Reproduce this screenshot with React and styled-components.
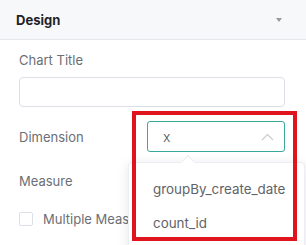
import React from 'react'
import styled, { createGlobalStyle } from 'styled-components'

const Global = createGlobalStyle`
  html, body {
    margin: 0;
    padding: 0;
    background: #fff;
  }
  body {
    font-family: Inter, "Noto Sans", sans-serif;
    width: 306px;
    height: 245px;
    overflow: hidden;
  }
`

const Panel = styled.div`
  position: relative;
  width: 306px;
  height: 245px;
  overflow: hidden;
  background: #fff;
`

const Header = styled.div`
  height: 39px;
  display: flex;
  align-items: center;
  justify-content: space-between;
  padding: 0 24px 0 16px;
  background: #f7f8fa;
  border-bottom: 1px solid #e6e8eb;
`

const HeaderTitle = styled.span`
  font-size: 13px;
  font-weight: 700;
  color: #1f2329;
`

const Caret = styled.span`
  width: 0;
  height: 0;
  border-left: 3.5px solid transparent;
  border-right: 3.5px solid transparent;
  border-top: 4px solid #9a9a9a;
`

const Body = styled.div`
  padding: 11px 21px 0 19px;
`

const Label = styled.div`
  font-size: 13px;
  line-height: 18px;
  color: #6b6f75;
`

const TextInput = styled.div`
  margin-top: 8px;
  height: 30px;
  box-sizing: border-box;
  border: 1px solid #dcdfe6;
  border-radius: 4px;
`

const Row = styled.div`
  display: flex;
  align-items: center;
  justify-content: space-between;
  height: 31px;
  margin-top: ${p => p.$gap}px;
`

const Select = styled.div`
  width: 138px;
  height: 31px;
  box-sizing: border-box;
  border: 1px solid #3aa89a;
  border-radius: 3px;
  display: flex;
  align-items: center;
  justify-content: space-between;
  padding: 0 10px 0 15px;
  font-size: 14px;
  font-weight: 300;
  color: #555;
`

const CheckRow = styled.div`
  display: flex;
  align-items: center;
  gap: 10px;
  margin-top: 15px;
  font-size: 13px;
  color: #6b6f75;
`

const Box = styled.span`
  width: 14px;
  height: 14px;
  box-sizing: border-box;
  border: 1px solid #dcdfe6;
  border-radius: 2px;
  background: #fff;
`

const Dropdown = styled.div`
  position: absolute;
  left: 128px;
  top: 162px;
  width: 177px;
  height: 100px;
  box-sizing: border-box;
  padding-top: 9px;
  background: #fff;
  border: 1px solid #ebeef5;
  border-radius: 4px;
  box-shadow: 0 2px 12px rgba(0, 0, 0, 0.1);

  &::before {
    content: '';
    position: absolute;
    left: 54px;
    top: -6px;
    width: 10px;
    height: 10px;
    background: #fff;
    border-left: 1px solid #ebeef5;
    border-top: 1px solid #ebeef5;
    transform: rotate(45deg);
    box-sizing: border-box;
  }
`

const Option = styled.div`
  height: 34px;
  display: flex;
  align-items: center;
  padding-left: 24px;
  font-size: 13.4px;
  color: #5f6368;
`

const Highlight = styled.div`
  position: absolute;
  left: 132px;
  top: 111px;
  width: 165px;
  height: 130px;
  box-sizing: border-box;
  border: 4px solid #e0141c;
  pointer-events: none;
`

export default function App() {
  return (
    <Panel>
      <Global />
      <Header>
        <HeaderTitle>Design</HeaderTitle>
        <Caret />
      </Header>
      <Body>
        <Label>Chart Title</Label>
        <TextInput />
        <Row $gap={14}>
          <Label>Dimension</Label>
          <Select>
            <span>x</span>
            <svg width="13" height="8" viewBox="0 0 13 8">
              <path d="M1 7 L6.5 1.5 L12 7" fill="none" stroke="#c8cbd0" strokeWidth="1.1" />
            </svg>
          </Select>
        </Row>
        <Row $gap={13}>
          <Label>Measure</Label>
        </Row>
        <CheckRow>
          <Box />
          <span>Multiple Measures</span>
        </CheckRow>
      </Body>
      <Dropdown>
        <Option>groupBy_create_date</Option>
        <Option>count_id</Option>
      </Dropdown>
      <Highlight />
    </Panel>
  )
}
